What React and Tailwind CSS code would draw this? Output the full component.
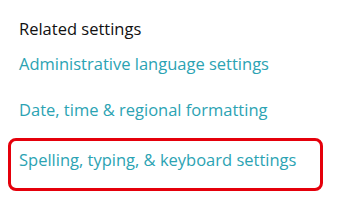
import React from 'react'

export default function App(){
  const font = { fontFamily: '"Open Sans", "Noto Sans", sans-serif' }
  return (
    <div className="w-[339px] h-[205px] bg-white overflow-hidden pt-[18px]" style={font}>
      <div className="pl-[19px] text-[16.5px] leading-[22px] text-[#111]">Related settings</div>
      <div className="pl-[19px] mt-[13px] text-[16.5px] leading-[22px] text-[#2ba3b3]">Administrative language settings</div>
      <div className="pl-[19px] mt-[24px] text-[16.5px] leading-[22px] text-[#2ba3b3]">Date, time &amp; regional formatting</div>
      <div className="ml-[8px] mt-[17px] w-[315px] h-[53px] border-[3px] border-[#e5000b] rounded-[8px] pt-[8px] pl-[8px] text-[16.5px] leading-[22px] text-[#2ba3b3]">
        Spelling, typing, &amp; keyboard settings
      </div>
    </div>
  )
}
